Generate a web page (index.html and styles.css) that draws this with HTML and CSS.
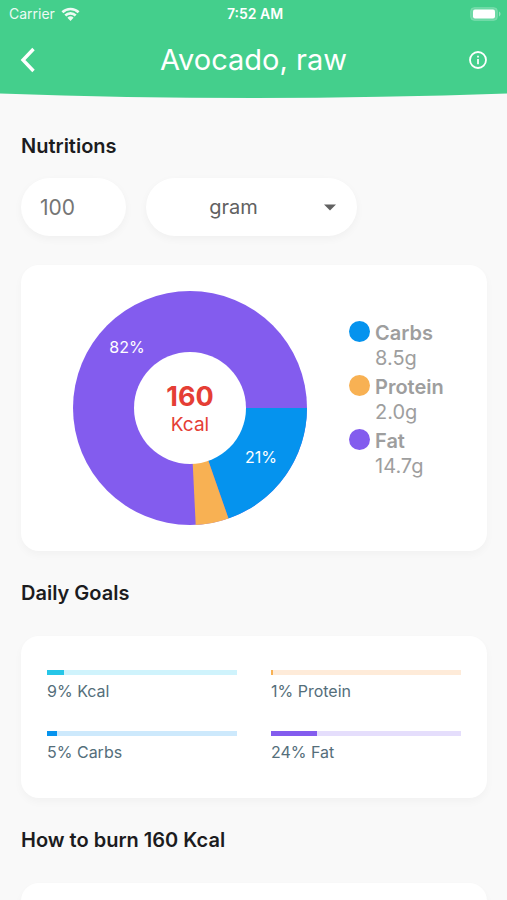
FILE: index.html
```html
<!DOCTYPE html>
<html lang="en">
<head>
<meta charset="utf-8">
<meta name="viewport" content="width=device-width, initial-scale=1">
<title>Avocado, raw</title>
<link rel="stylesheet" href="styles.css">
</head>
<body>
<header class="header">
  <div class="status">
    <div class="carrier">
      <span>Carrier</span>
      <svg width="19" height="14" viewBox="0 0 18 14" aria-hidden="true">
        <g fill="none" stroke="#fff" stroke-width="2.6">
          <path d="M0.9 5.300a11.600 11.600 0 0 1 16.200 0"/>
          <path d="M3.800 8.500a7.400 7.400 0 0 1 10.400 0"/>
        </g>
        <path d="M9 13.900L5.900 10.800a4.500 4.500 0 0 1 6.200 0z" fill="#fff"/>
      </svg>
    </div>
    <time class="clock">7:52 AM</time>
    <svg class="battery" width="31" height="14" viewBox="0 0 31 14" aria-hidden="true">
      <rect x="0.500" y="0.500" width="27" height="13" rx="4" fill="#fff" fill-opacity=".22" stroke="#fff" stroke-opacity=".15"/>
      <rect x="3" y="2.500" width="22" height="9" rx="2" fill="#fff"/>
      <path d="M29 4.600c2 .7 2 4.100 0 4.800z" fill="#fff" fill-opacity=".4"/>
    </svg>
  </div>
  <div class="nav">
    <button class="icon-button" type="button" aria-label="Back">
      <svg width="18" height="26" viewBox="0 0 18 26" aria-hidden="true"><path d="M13.500 2L3 13l10.500 11" fill="none" stroke="#fff" stroke-width="3.400"/></svg>
    </button>
    <h1 class="title">Avocado, raw</h1>
    <button class="icon-button" type="button" aria-label="Information">
      <svg width="18" height="18" viewBox="0 0 18 18" aria-hidden="true">
        <circle cx="9" cy="9" r="8" fill="none" stroke="#fff" stroke-width="1.800"/>
        <path d="M9 8v5.200M9 4.700v1.800" stroke="#fff" stroke-width="1.700"/>
      </svg>
    </button>
  </div>
</header>
<svg class="curve" viewBox="0 0 100 5" preserveAspectRatio="none" aria-hidden="true"><path d="M0 0H100V.5Q50 9.500 0 .5z" fill="#44cf8c"/></svg>

<main class="content">
  <h2 class="heading heading-first">Nutritions</h2>
  <form class="portion">
    <input class="field amount" type="text" inputmode="numeric" value="100" aria-label="Amount">
    <div class="unit">
      <select class="field unit-select" aria-label="Unit">
        <option>gram</option>
      </select>
      <svg class="caret" width="12" height="7" viewBox="0 0 12 7" aria-hidden="true"><path d="M0 .5h12L6 6.500z" fill="#616161"/></svg>
    </div>
  </form>

  <section class="card chart-card">
    <svg class="donut" viewBox="-117 -117 234 234" role="img" aria-label="Share of fat, carbs and protein">
      <circle r="117" fill="#835cee"/>
      <path d="M0 0H117A117 117 0 0 1 38.500 110.500z" fill="#0593ee"/>
      <path d="M0 0L38.500 110.500A117 117 0 0 1 5.700 116.900z" fill="#f8b153"/>
      <circle r="56" fill="#fff"/>
      <text class="share" x="-63" y="-55">82%</text>
      <text class="share" x="71" y="55">21%</text>
      <text class="total" x="0" y="-2">160</text>
      <text class="total-unit" x="0" y="23">Kcal</text>
    </svg>
    <ul class="legend">
      <li class="legend-item"><span class="dot dot-carbs"></span><div><strong class="name">Carbs</strong><span class="value">8.5g</span></div></li>
      <li class="legend-item"><span class="dot dot-protein"></span><div><strong class="name">Protein</strong><span class="value">2.0g</span></div></li>
      <li class="legend-item"><span class="dot dot-fat"></span><div><strong class="name">Fat</strong><span class="value">14.7g</span></div></li>
    </ul>
  </section>

  <h2 class="heading">Daily Goals</h2>
  <section class="card goals">
    <div class="goal kcal"><div class="track"><div class="fill" style="width:9%"></div></div><p class="goal-label">9% Kcal</p></div>
    <div class="goal protein"><div class="track"><div class="fill" style="width:1%"></div></div><p class="goal-label">1% Protein</p></div>
    <div class="goal carbs"><div class="track"><div class="fill" style="width:5%"></div></div><p class="goal-label">5% Carbs</p></div>
    <div class="goal fat"><div class="track"><div class="fill" style="width:24%"></div></div><p class="goal-label">24% Fat</p></div>
  </section>

  <h2 class="heading">How to burn 160 Kcal</h2>
  <section class="card burn"></section>
</main>
</body>
</html>
```
FILE: styles.css
```css
* { box-sizing: border-box; }

html { scrollbar-width: none; }

body {
  margin: 0;
  background: #f9f9f9;
  color: #1c1c1e;
  font-family: Inter, "Liberation Sans", sans-serif;
}

h1, h2, p, ul { margin: 0; padding: 0; }

.header {
  height: 93px;
  background: #44cf8c;
  color: #fff;
}

.status {
  display: grid;
  grid-template-columns: 1fr auto 1fr;
  align-items: center;
  height: 27px;
  padding: 0 6px 0 9px;
  font-size: 14px;
}

.carrier {
  display: flex;
  align-items: center;
  gap: 6px;
  opacity: .9;
}

.clock { font-weight: 600; }

.battery { justify-self: end; }

.nav {
  display: grid;
  grid-template-columns: 1fr auto 1fr;
  align-items: center;
  height: 66px;
  padding: 0 20px;
}

.icon-button {
  display: flex;
  padding: 0;
  border: 0;
  background: none;
}

.icon-button:last-child { justify-self: end; }

.title {
  font-size: 29px;
  font-weight: 400;
  line-height: 34px;
}

.curve {
  display: block;
  width: 100%;
  height: 5px;
}

.content { padding: 36px 20px 30px 21px; }

.heading {
  margin: 30px 0 31px;
  font-size: 20px;
  font-weight: 600;
  line-height: 24px;
}

.heading-first { margin: 0 0 20px; }

.portion {
  display: flex;
  gap: 20px;
  margin-bottom: 29px;
}

.field {
  height: 58px;
  border: 0;
  border-radius: 29px;
  background: #fff;
  box-shadow: 0 3px 8px rgba(0, 0, 0, .04);
  color: #616161;
  font-family: inherit;
  font-size: 20px;
}

.amount {
  width: 105px;
  padding: 0 19px;
  color: #757575;
  font-size: 21px;
}

.unit {
  position: relative;
  width: 211px;
}

.unit-select {
  width: 100%;
  padding: 0 36px 0 0;
  appearance: none;
  text-align: center;
}

.caret {
  position: absolute;
  top: 26px;
  right: 21px;
  pointer-events: none;
}

.card {
  border-radius: 18px;
  background: #fff;
  box-shadow: 0 4px 8px rgba(0, 0, 0, .03);
}

.chart-card {
  display: flex;
  align-items: flex-start;
  gap: 42px;
  padding: 26px 20px 26px 52px;
}

.donut {
  flex: 0 1 234px;
  min-width: 0;
}

.donut text { text-anchor: middle; }

.share {
  fill: #fff;
  font-size: 16px;
}

.total, .total-unit { fill: #e53e35; }

.total {
  font-size: 27px;
  font-weight: 700;
}

.total-unit { font-size: 19px; }

.legend {
  display: flex;
  flex-direction: column;
  gap: 4px;
  padding-top: 30px;
  list-style: none;
}

.legend-item {
  display: flex;
  gap: 5px;
  color: #9e9e9e;
  font-size: 20px;
  line-height: 25px;
}

.name, .value { display: block; }

.name { font-weight: 600; }

.dot {
  width: 21px;
  height: 21px;
  border-radius: 50%;
}

.dot-carbs { background: #0593ee; }
.dot-protein { background: #f8b153; }
.dot-fat { background: #835cee; }

.goals {
  display: grid;
  grid-template-columns: 1fr 1fr;
  gap: 28px 34px;
  padding: 34px 26px;
}

.track {
  height: 5px;
  background: var(--tint);
}

.fill {
  height: 100%;
  background: var(--tone);
}

.goal-label {
  padding: 5px 0 1px;
  color: #546e7a;
  font-size: 16px;
  line-height: 22px;
}

.kcal { --tone: #26c6e8; --tint: #cff3fc; }
.protein { --tone: #f8b153; --tint: #feebd9; }
.carbs { --tone: #0593ee; --tint: #cde9fc; }
.fat { --tone: #835cee; --tint: #e5defc; }

.burn { height: 160px; }
```
